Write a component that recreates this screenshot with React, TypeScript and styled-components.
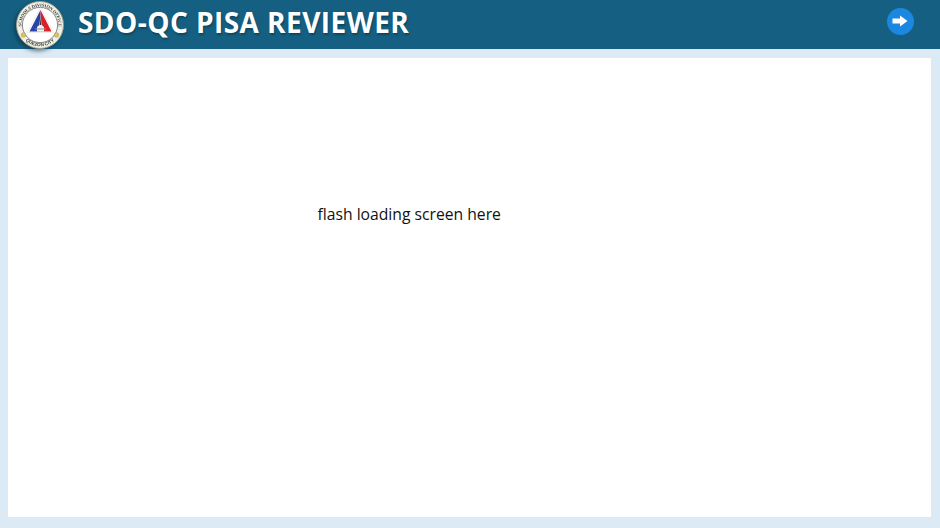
import React from "react";
import styled, { createGlobalStyle } from "styled-components";

const Global = createGlobalStyle`
  html, body { margin: 0; padding: 0; height: 100%; background: #dceaf6; }
  #root { height: 100%; }
`;

const Page = styled.div`
  width: 940px;
  height: 528px;
  display: flex;
  flex-direction: column;
  background: #dceaf6;
  font-family: "Open Sans", sans-serif;
  overflow: hidden;
`;

const Header = styled.header`
  height: 49px;
  flex: none;
  background: #156082;
  display: flex;
  align-items: center;
  padding: 0 26px 0 16px;
  box-sizing: border-box;
`;

const Logo = styled.svg`
  width: 48px;
  height: 48px;
  flex: none;
  margin-top: 1px;
  filter: drop-shadow(-2px 2px 2px rgba(8, 40, 56, 0.6));
`;

const Title = styled.h1`
  margin: -4px 0 0 14px;
  font-size: 28px;
  letter-spacing: 0.45px;
  line-height: 49px;
  font-weight: 700;
  color: #ffffff;
  white-space: nowrap;
  text-shadow: 1px 2px 2px rgba(10, 50, 70, 0.55);
`;

const NextButton = styled.button`
  margin-left: auto;
  width: 27px;
  height: 27px;
  padding: 0;
  border: 0;
  border-radius: 50%;
  background: #1b87e0;
  display: flex;
  align-items: center;
  justify-content: center;
  margin-top: -7px;
`;

const ArrowIcon = styled.svg`
  width: 16px;
  height: 12px;
  margin-left: -1px;
`;

const Panel = styled.main`
  flex: none;
  height: 459px;
  margin: 9px 9px 0 8px;
  background: #ffffff;
  padding: 145px 0 0 309.5px;
  box-sizing: border-box;
`;

const Message = styled.p`
  margin: 0;
  font-size: 15.7px;
  line-height: 22px;
  color: #111111;
`;

function SealLogo() {
  return (
    <Logo viewBox="0 0 48 48" role="img" aria-label="Schools Division Office Quezon City seal">
      <defs>
        <path id="ringTop" d="M6.5 30.5 A18.6 18.6 0 1 1 41.5 30.5" />
        <path id="ringBottom" d="M5.8 35 A21.3 21.3 0 0 0 42.2 35" />
      </defs>
      <circle cx="24" cy="24" r="23.5" fill="#f1f0e4" stroke="#9b9c8c" strokeWidth="1" />
      <circle cx="24" cy="24" r="17.6" fill="#ffffff" stroke="#55585c" strokeWidth="0.7" />
      <text fontFamily="Liberation Serif, serif" fontSize="4.4" fontWeight="700" fill="#30343c">
        <textPath href="#ringTop" startOffset="50%" textAnchor="middle">SCHOOLS DIVISION OFFICE</textPath>
      </text>
      <text fontFamily="Liberation Sans, sans-serif" fontSize="4.6" fontWeight="700" fill="#3f4240">
        <textPath href="#ringBottom" startOffset="50%" textAnchor="middle">QUEZON CITY</textPath>
      </text>
      <polygon points="24.5,6.5 11.5,31.5 37.5,31.5" fill="#ffffff" stroke="#d8d8d0" strokeWidth="0.5" />
      <polygon points="24.5,9 13.5,30.5 24.5,30.5" fill="#2a43a8" />
      <polygon points="24.5,9 35.5,30.5 24.5,30.5" fill="#d5222c" />
      <path d="M24.5 13 L25.6 24 L28 26 L28 30.5 L21 30.5 L21 26 L23.4 24 Z" fill="#f4f4f2" />
      <path d="M24.5 13 L25.1 24 L23.9 24 Z" fill="#33363a" />
      <rect x="19" y="27.5" width="11" height="1" fill="#8a8c88" />
      <circle cx="7.5" cy="34" r="2.3" fill="#d8c660" stroke="#8f8740" strokeWidth="0.4" />
      <circle cx="40.5" cy="34" r="2.3" fill="#d8c660" stroke="#8f8740" strokeWidth="0.4" />
    </Logo>
  );
}

export default function App() {
  return (
    <Page>
      <Global />
      <Header>
        <SealLogo />
        <Title>SDO-QC PISA REVIEWER</Title>
        <NextButton aria-label="Next">
          <ArrowIcon viewBox="0 0 16 12">
            <path d="M0.5 3.5 H8 V0.5 L15.5 6 L8 11.5 V8.5 H0.5 Z" fill="#ffffff" />
          </ArrowIcon>
        </NextButton>
      </Header>
      <Panel>
        <Message>flash loading screen here</Message>
      </Panel>
    </Page>
  );
}
